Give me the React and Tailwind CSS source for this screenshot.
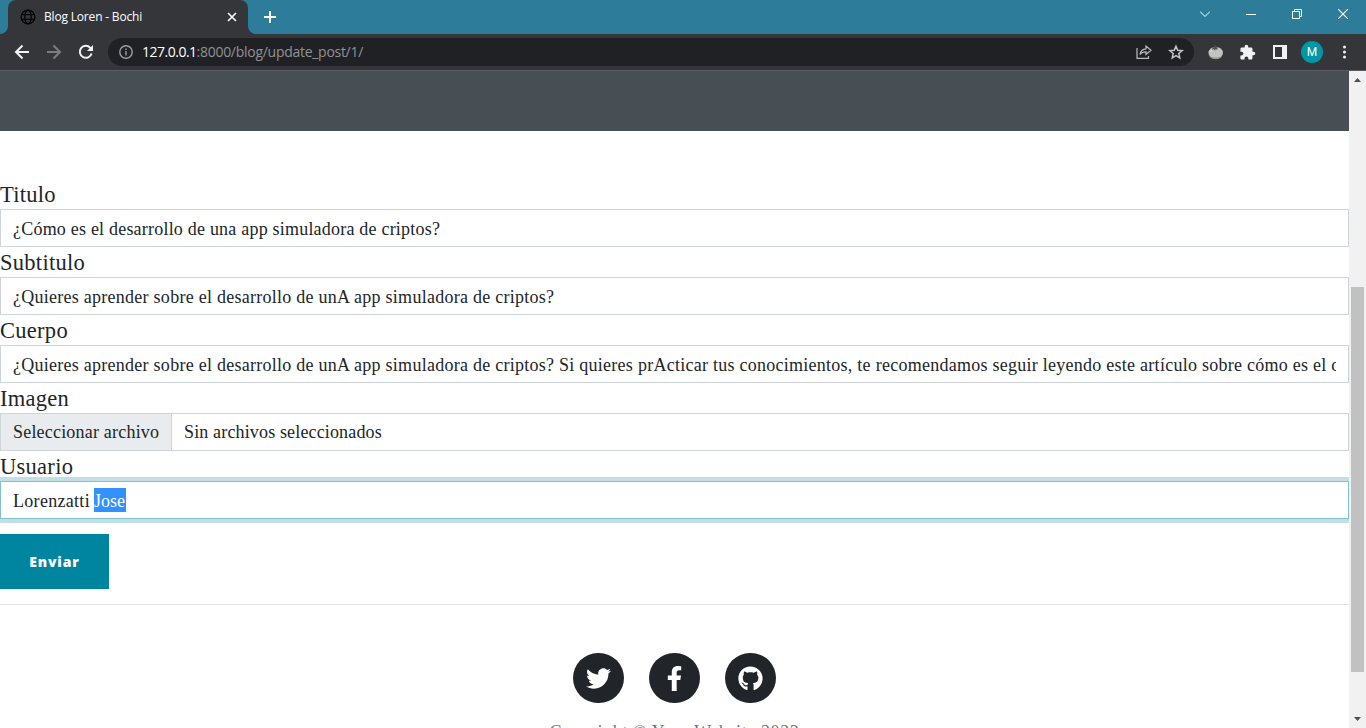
import React from "react";
import { FaTwitter, FaFacebookF, FaGithub } from "react-icons/fa";
import { MdExtension } from "react-icons/md";

const ui = "font-['Open_Sans','Noto_Sans',sans-serif]";
const inputBase = "flex h-[38px] w-full items-center border bg-white px-3 pt-px text-[18px] leading-6 text-[#212529]";

function TabStrip() {
  return (
    <div className="flex h-[34px] shrink-0 bg-[#2d7d9a]">
      <svg className="mt-[26px] h-2 w-2" viewBox="0 0 8 8"><path d="M8 0v8H0a8 8 0 0 0 8-8" fill="#35363a" /></svg>
      <div className="flex h-full w-60 items-center rounded-t-lg bg-[#35363a] pl-3 pr-[10px]">
        <svg className="h-4 w-4" viewBox="0 0 16 16" fill="none" stroke="#050505" strokeWidth="1.3">
          <circle cx="8" cy="8" r="6.9" /><ellipse cx="8" cy="8" rx="3.2" ry="6.9" /><path d="M1.6 5.6h12.8M1.6 10.4h12.8" />
        </svg>
        <span className="ml-2 flex-1 whitespace-nowrap text-[12px] tracking-[-0.18px] text-white">Blog Loren - Bochi</span>
        <svg className="h-3 w-3" viewBox="0 0 12 12" stroke="#fff" strokeWidth="1.6"><path d="M2 2l8 8M10 2l-8 8" /></svg>
      </div>
      <svg className="mt-[26px] h-2 w-2" viewBox="0 0 8 8"><path d="M0 0v8h8a8 8 0 0 1-8-8" fill="#35363a" /></svg>
      <svg className="ml-2 mt-[11px] h-3 w-3" viewBox="0 0 12 12" stroke="#fff" strokeWidth="2"><path d="M6 0v12M0 6h12" /></svg>
      <div className="ml-auto flex items-start gap-9 pr-[18px] pt-[9px]">
        <svg className="h-[10px] w-[10px]" viewBox="0 0 10 10" fill="none" stroke="#fff"><path d="M0 2.5l5 5 5-5" /></svg>
        <svg className="h-[10px] w-[10px]" viewBox="0 0 10 10" fill="none" stroke="#fff"><path d="M0 5.5h10" /></svg>
        <svg className="h-[10px] w-[10px]" viewBox="0 0 10 10" fill="none" stroke="#fff"><path d="M.5 2.5h7v7h-7zM2.500 2.500v-2h7v7h-2" /></svg>
        <svg className="h-[10px] w-[10px]" viewBox="0 0 10 10" fill="none" stroke="#fff" strokeWidth="1.1"><path d="M0 0l10 10M10 0L0 10" /></svg>
      </div>
    </div>
  );
}

function Toolbar() {
  return (
    <div className="flex h-[37px] shrink-0 items-center border-b border-[#5b5c5f] bg-[#35363a] pl-[14px]">
      <svg className="h-4 w-4" viewBox="0 0 16 16" fill="none" stroke="#f1f3f4" strokeWidth="2"><path d="M15 8H2.500M8.500 1.500L2 8l6.500 6.500" /></svg>
      <svg className="ml-4 h-4 w-4" viewBox="0 0 16 16" fill="none" stroke="#7c7d80" strokeWidth="2"><path d="M1 8h12.500M7.500 1.500L14 8l-6.500 6.500" /></svg>
      <svg className="ml-4 h-4 w-4" viewBox="0 0 16 16" fill="none" stroke="#f1f3f4" strokeWidth="2"><path d="M13.600 9.500a6 6 0 1 1-1.300-5.700L13 4.500" /><path d="M15 1v6H9z" fill="#f1f3f4" stroke="none" /></svg>
      <div className="ml-[14px] flex h-7 w-[1086px] items-center rounded-full bg-[#202124] pl-[11px] pr-[10px]">
        <svg className="h-[14px] w-[14px]" viewBox="0 0 14 14" fill="none" stroke="#9aa0a6" strokeWidth="1.4"><circle cx="7" cy="7" r="6.200" /><path d="M7 6v4.500M7 3.400V5" /></svg>
        <span className="ml-[9px] flex-1 whitespace-nowrap text-[14px] leading-5 tracking-[-0.28px] text-[#8f9296]"><span className="tracking-[-0.5px] text-white">127.0.0.1</span>:8000/blog/update_post/1/</span>
        <svg className="h-4 w-4" viewBox="0 0 16 16" fill="none" stroke="#b9bbbe" strokeWidth="1.200"><path d="M1 4v10.400h11.500V12" /><path d="M4 10.500C4.500 7 6.500 5 10 4.800V2l5 4.300-5 4.200V7.800C7.500 7.700 5.500 8.500 4 10.500z" /></svg>
        <svg className="ml-4 h-4 w-4" viewBox="0 0 16 16" fill="none" stroke="#c3c5c8" strokeWidth="1.500"><path d="M8 2.200l1.750 4.150 4.400.35-3.350 2.850 1 4.300L8 11.600l-3.800 2.250 1-4.300L1.850 6.700l4.400-.35z" /></svg>
      </div>
      <svg className="ml-[14px] h-4 w-4" viewBox="0 0 16 16"><ellipse cx="7.700" cy="8.900" rx="7.200" ry="6.200" fill="#c2c2c2" /><path d="M1 11.500c3 2.800 10 2.800 13 0-1 5-11 5-13 0" fill="#979797" /><path d="M3.500 3.500l3-.3L6.800 1h1l.4 2.200 3.300.6-2.500.7.5 1.500-2-1-.5 2-1-2-2 1 .6-1.500z" fill="#4d4d4d" /><path d="M2.500 8l1-1.500" stroke="#eee" /></svg>
      <MdExtension className="ml-[15px] h-[17px] w-[17px] text-[#f1f3f4]" />
      <svg className="ml-[17px] h-[14px] w-[14px]" viewBox="0 0 14 14"><path fillRule="evenodd" d="M0 0h14v14H0zM2 2h7v10H2z" fill="#f1f3f4" /></svg>
      <div className="ml-[14px] flex h-[22px] w-[22px] items-center justify-center rounded-full bg-[#0097a7] font-[Roboto,sans-serif] text-[12px] text-white">M</div>
      <svg className="ml-5 h-4 w-[3px]" viewBox="0 0 3 16" fill="#f1f3f4"><circle cx="1.500" cy="3" r="1.500" /><circle cx="1.500" cy="8" r="1.500" /><circle cx="1.500" cy="13" r="1.500" /></svg>
    </div>
  );
}

function Label({ children }) {
  return <label className="block h-[30px] whitespace-nowrap text-[22.500px] leading-8 tracking-[0.28px] text-[#212529]">{children}</label>;
}

function Social({ icon: Icon }) {
  return (
    <a className="flex h-[50px] w-[51px] items-center justify-center rounded-full bg-[#212529] text-white">
      <Icon className="h-[25px] w-[25px]" />
    </a>
  );
}

export default function App() {
  return (
    <div className={`flex h-[728px] w-[1366px] flex-col overflow-hidden bg-white ${ui}`}>
      <TabStrip />
      <Toolbar />
      <div className="flex min-h-0 flex-1">
        <main className="w-[1349px] overflow-hidden bg-white font-['Liberation_Serif',serif]">
          <div className="h-[60px] bg-[#474e54]" />
          <form className="pt-12">
            <Label>Titulo</Label>
            <div className={`${inputBase} border-[#ced4da]`}><span className="whitespace-nowrap tracking-[0.21px]">¿Cómo es el desarrollo de una app simuladora de criptos?</span></div>
            <Label>Subtitulo</Label>
            <div className={`${inputBase} border-[#ced4da]`}><span className="whitespace-nowrap tracking-[0.26px]">¿Quieres aprender sobre el desarrollo de unA app simuladora de criptos?</span></div>
            <Label>Cuerpo</Label>
            <div className={`${inputBase} border-[#ced4da]`}><span className="overflow-hidden whitespace-nowrap tracking-[0.26px]">¿Quieres aprender sobre el desarrollo de unA app simuladora de criptos? Si quieres prActicar tus conocimientos, te recomendamos seguir leyendo este artículo sobre cómo es el d</span></div>
            <Label>Imagen</Label>
            <div className="flex h-[38px] border border-[#ced4da] text-[18px] leading-[37px] text-[#212529]">
              <div className="w-[171px] whitespace-nowrap border-r border-[#ced4da] bg-[#e9ecef] pl-3 tracking-[0.2px]">Seleccionar archivo</div>
              <span className="whitespace-nowrap pl-3 tracking-[0.15px]">Sin archivos seleccionados</span>
            </div>
            <Label>Usuario</Label>
            <div className={`${inputBase} border-[#80c2d0] shadow-[0_0_0_4px_#bfe0e7]`}>
              <span className="w-[81px] whitespace-pre tracking-[0.3px]">Lorenzatti </span><span className="-mt-px h-6 w-8 whitespace-nowrap bg-[#3390ff] pt-px text-white">Jose</span>
            </div>
            <button type="button" className="mt-[15px] block h-[55px] w-[109px] bg-[#0085a1] font-['Open_Sans',sans-serif] text-[14px] font-extrabold tracking-[0.8px] text-white">Enviar</button>
          </form>
          <footer className="mt-[15px] border-t border-[#dee2e6] pt-12">
            <div className="flex justify-center gap-[25px]">
              <Social icon={FaTwitter} /><Social icon={FaFacebookF} /><Social icon={FaGithub} />
            </div>
            <p className="mt-[17px] whitespace-nowrap text-center text-[18px] leading-6 tracking-[0.6px] text-[#6c757d]">Copyright © Your Website 2023</p>
          </footer>
        </main>
        <div className="flex w-[17px] flex-col items-center bg-[#f1f1f1]">
          <svg className="mt-[7px] h-1 w-[7px]" viewBox="0 0 7 4"><path d="M0 4l3.500-4L7 4z" fill="#505050" /></svg>
          <div className="mt-[205px] h-[385px] w-[13px] bg-[#c1c1c1]" />
          <svg className="mt-[45px] h-1 w-[7px]" viewBox="0 0 7 4"><path d="M0 0l3.500 4L7 0z" fill="#505050" /></svg>
        </div>
      </div>
    </div>
  );
}
